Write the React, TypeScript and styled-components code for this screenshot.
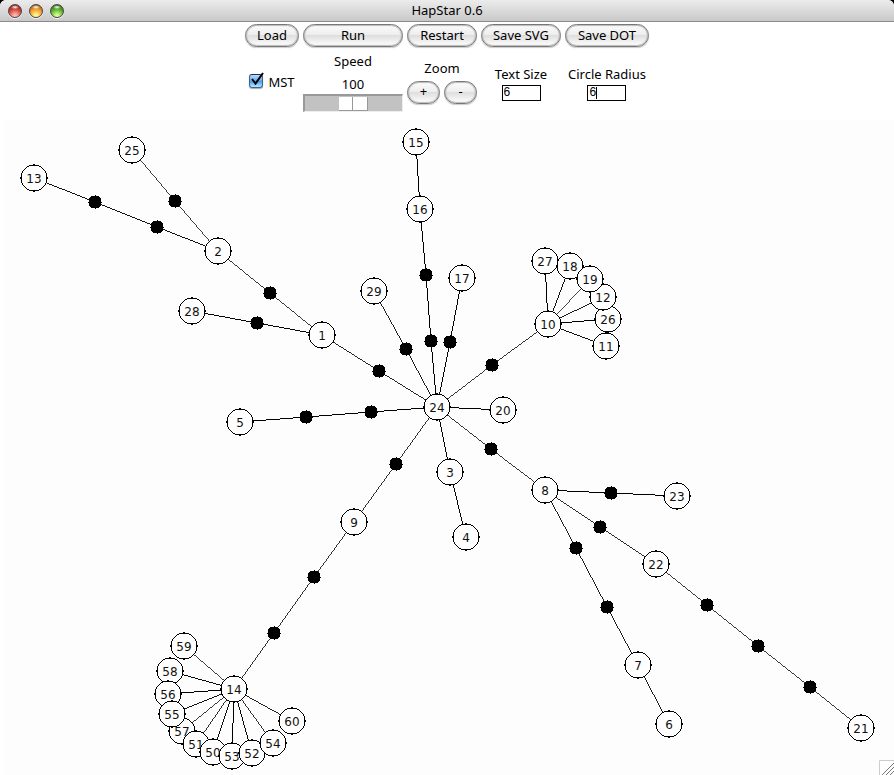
import React, { useState } from "react";
import styled, { createGlobalStyle, css } from "styled-components";

const GlobalStyle = createGlobalStyle`
  * { box-sizing: border-box; }
  html, body, #root { height: 100%; }
  body {
    margin: 0;
    overflow: hidden;
    background: #fff;
    color: #000;
    font: 13px/18px "Noto Sans", "Open Sans", sans-serif;
  }
`;

const Window = styled.div`
  display: flex;
  flex-direction: column;
  height: 100vh;
  background: #fff;
`;

const TitleBar = styled.header`
  display: grid;
  grid-template-columns: 1fr auto 1fr;
  align-items: center;
  flex: none;
  height: 22px;
  padding: 0 8px;
  border-bottom: 1px solid #8a8a8a;
  border-radius: 6px 6px 0 0;
  background: linear-gradient(#ececec, #c8c8c8);
  box-shadow: 0 -6px 0 6px #000;
`;

const Title = styled.h1`
  margin: 0;
  padding-bottom: 2px;
  font-size: 13px;
  font-weight: 400;
  line-height: 18px;
`;

const Lights = styled.div`
  display: flex;
  gap: 7px;
`;

const Light = styled.button<{ $dark: string; $mid: string; $glow: string }>`
  width: 14px;
  height: 14px;
  padding: 0;
  border: 1px solid #4c4444;
  border-radius: 50%;
  background:
    radial-gradient(ellipse 4px 2px at 50% 18%, #fff, transparent),
    radial-gradient(circle at 50% 90%, ${(p) => p.$glow} 10%, ${(p) => p.$mid} 55%, ${(p) => p.$dark});
  box-shadow: 0 1px 0 #f2f2f2;
`;

const Toolbar = styled.div`
  display: grid;
  grid-template-columns: 54px 100px 70px 80px 84px;
  column-gap: 4px;
  justify-content: center;
  flex: none;
  height: 98px;
  padding-top: 2px;
`;

const Column = styled.div`
  display: flex;
  flex-direction: column;
  align-items: center;
`;

const Group = styled.div<{ $raise: number }>`
  display: flex;
  flex: 1;
  flex-direction: column;
  align-items: center;
  justify-content: center;
  padding-bottom: ${(p) => p.$raise}px;
  white-space: nowrap;
`;

const PushButton = styled.button<{ $small?: boolean }>`
  width: ${(p) => (p.$small ? "33px" : "100%")};
  height: 23px;
  padding: 0 0 2px;
  border: 1px solid #777;
  border-radius: 12px;
  background: linear-gradient(#fcfcfc, #eee 45%, #dedede 50%, #fff);
  box-shadow: inset 0 0 1px 1px #bbb, 0 1px 1px #ccc;
  color: #000;
  font: inherit;
  white-space: nowrap;
`;

const CheckLabel = styled.label`
  display: flex;
  align-items: center;
  gap: 4px;
`;

const CheckWrap = styled.span`
  position: relative;
  display: block;
  width: 15px;
  height: 20px;
`;

const Check = styled.input`
  appearance: none;
  display: block;
  width: 14px;
  height: 14px;
  margin: 2px 0 0;
  border: 1px solid #3b5fa0;
  border-top-color: #1c2a72;
  border-radius: 3px;
  background: linear-gradient(#b9dcf8, #66acea 48%, #4a9ae6 52%, #aef0ff);
  box-shadow: 0 1px 1px #aaa;
  &:not(:checked) + svg { visibility: hidden; }
`;

const CheckMark = styled.svg`
  position: absolute;
  top: 0;
  left: 0;
  pointer-events: none;
`;

const SpeedLabel = styled.label`
  display: flex;
  flex-direction: column;
  align-items: center;
  gap: 5px;
  margin: 5px 0 1px;
  width: 100%;
  text-align: center;
`;

const thumb = css`
  appearance: none;
  width: 29px;
  height: 14px;
  border: 0 solid #999;
  border-width: 0 1px 1px 0;
  border-radius: 0;
  background: linear-gradient(90deg, #fff 13px, #999 13px 14px, #fff 14px);
`;

const Slider = styled.input`
  appearance: none;
  width: 100%;
  height: 18px;
  margin: 0;
  padding: 1px 0 0;
  border: 1px solid #999;
  border-width: 2px 1px 1px 2px;
  border-right-color: #eee;
  border-bottom-color: #eee;
  background: #c2c2c2;
  &::-webkit-slider-thumb { ${thumb} }
  &::-moz-range-thumb { ${thumb} }
`;

const ZoomButtons = styled.div`
  display: flex;
  justify-content: space-between;
  width: 70px;
  margin-top: 4px;
`;

const FieldLabel = styled.label`
  display: flex;
  flex-direction: column;
  align-items: center;
  gap: 2px;
`;

const FieldWrap = styled.span`
  position: relative;
  display: block;
  height: 16px;
`;

const Field = styled.input`
  display: block;
  width: 39px;
  height: 16px;
  padding: 0 0 1px 1px;
  border: 1px solid #000;
  border-radius: 0;
  outline: none;
  background: #fff;
  font: 12px/13px "Liberation Sans", Arial, sans-serif;
`;

const Caret = styled.span`
  position: absolute;
  top: 2px;
  left: 9px;
  width: 1px;
  height: 12px;
  background: #000;
`;

const Canvas = styled.main`
  position: relative;
  flex: 1;
  min-height: 0;
  overflow: hidden;
  margin-left: 4px;
  background: #fdfdfd;
`;

const Graph = styled.svg`
  display: block;
  font: 12px "DejaVu Sans", sans-serif;
`;

const Grip = styled.svg`
  position: absolute;
  right: 0;
  bottom: 0;
`;

type Point = [number, number];

const nodes: Record<string, Point> = {
  "15": [416, 142], "16": [420, 209], "17": [462, 278], "29": [374, 291],
  "25": [132, 150], "13": [34, 178], "2": [218, 251], "28": [192, 311],
  "1": [322, 335], "5": [240, 422], "20": [503, 410], "3": [450, 472],
  "4": [466, 537], "9": [354, 522], "8": [545, 490], "23": [677, 496],
  "22": [656, 564], "7": [638, 665], "6": [669, 724], "21": [861, 728],
  "27": [545, 261], "18": [570, 266], "26": [608, 319], "12": [603, 297],
  "19": [590, 279], "11": [606, 346], "10": [548, 324],
  "59": [184, 646], "58": [170, 671], "56": [168, 694], "57": [182, 731],
  "51": [196, 744], "50": [213, 752], "53": [232, 756], "52": [252, 753],
  "54": [273, 743], "55": [172, 714], "60": [292, 721],
  "14": [234, 689], "24": [437, 407],
};

const paths: { from: string; to: string; via?: Point[] }[] = [
  { from: "15", to: "16" },
  { from: "16", to: "24", via: [[426, 275], [431, 341]] },
  { from: "17", to: "24", via: [[450, 342]] },
  { from: "29", to: "24", via: [[406, 349]] },
  { from: "25", to: "2", via: [[175, 201]] },
  { from: "13", to: "2", via: [[95, 202], [157, 227]] },
  { from: "2", to: "1", via: [[270, 293]] },
  { from: "28", to: "1", via: [[257, 323]] },
  { from: "1", to: "24", via: [[379, 371]] },
  { from: "5", to: "24", via: [[306, 417], [371, 412]] },
  { from: "20", to: "24" },
  { from: "24", to: "3" },
  { from: "3", to: "4" },
  { from: "24", to: "9", via: [[396, 464]] },
  { from: "9", to: "14", via: [[314, 577], [274, 633]] },
  { from: "24", to: "8", via: [[491, 449]] },
  { from: "8", to: "23", via: [[611, 493]] },
  { from: "8", to: "22", via: [[600, 527]] },
  { from: "8", to: "7", via: [[576, 548], [607, 607]] },
  { from: "7", to: "6" },
  { from: "22", to: "21", via: [[707, 605], [758, 646], [810, 687]] },
  { from: "24", to: "10", via: [[492, 365]] },
  ...["27", "18", "19", "12", "26", "11"].map((to) => ({ from: "10", to })),
  ...["59", "58", "56", "55", "57", "51", "50", "53", "52", "54", "60"].map((to) => ({ from: "14", to })),
];

const OFFSET_X = 4;
const OFFSET_Y = 120;

// Later names are drawn over earlier ones where circles overlap.
const stacking = ["26", "12", "27", "18", "19", "58", "56", "57", "55", "51", "50", "53", "52", "54"];
const order = (name: string) => stacking.indexOf(name);

// One quarter of an aliased circle outline, with a tick on each axis.
const QUARTER = "M0 12h5v1H0zM5 11h2v1H5zM7 10h1v1H7zM8 9h1v1H8zM9 8h1v1H9zM10 7h1v1h-1zM11 5h1v2h-1zM12 0h1v5h-1zM13 0h1v1h-1zM0 13h1v1H0z";

// The stroke narrows with the slope so each step of an aliased line is one pixel.
function Edge({ a, b }: { a: Point; b: Point }) {
  const dx = Math.abs(b[0] - a[0]);
  const dy = Math.abs(b[1] - a[1]);
  return (
    <line x1={a[0]} y1={a[1]} x2={b[0]} y2={b[1]} strokeWidth={Math.max(dx, dy) / Math.hypot(dx, dy)} />
  );
}

function Network() {
  return (
    <Graph width="890" height="655" role="img" aria-label="Haplotype network">
      <g transform={`translate(${-OFFSET_X} ${-OFFSET_Y})`}>
        <g fill="none" stroke="#000" shapeRendering="crispEdges">
          {paths.map(({ from, to, via = [] }) => {
            const points = [nodes[from], ...via, nodes[to]];
            return points.slice(1).map((p, i) => <Edge key={`${from}-${to}-${i}`} a={points[i]} b={p} />);
          })}
        </g>
        {paths.flatMap(({ via = [] }) => via).map(([x, y]) => (
          <g key={`${x}-${y}`} transform={`translate(${x} ${y})`} shapeRendering="crispEdges">
            <path d="M-4-6h8v1h1v1h1v8h-1v1h-1v1h-8v-1h-1v-1h-1v-8h1v-1h1z" />
            <path d="M0-7h1v14h-1zM-7 0h14v1h-14z" />
          </g>
        ))}
        {Object.entries(nodes).sort((a, b) => order(a[0]) - order(b[0])).map(([name, [x, y]]) => (
          <g key={name} transform={`translate(${x} ${y})`}>
            <g shapeRendering="crispEdges">
              <circle r="12.5" fill="#fff" />
              <path d={QUARTER} />
              <path d={QUARTER} transform="scale(-1 1)" />
              <path d={QUARTER} transform="scale(1 -1)" />
              <path d={QUARTER} transform="scale(-1 -1)" />
            </g>
            <text y="5" textAnchor="middle" fill="#111">{name}</text>
          </g>
        ))}
      </g>
    </Graph>
  );
}

export default function App() {
  const [mst, setMst] = useState(true);
  const [speed, setSpeed] = useState(100);
  const [textSize, setTextSize] = useState("6");
  const [radius, setRadius] = useState("6");
  const [touched, setTouched] = useState(false);

  return (
    <>
      <GlobalStyle />
      <Window>
        <TitleBar>
          <Lights>
            <Light aria-label="Close" $dark="#701818" $mid="#d0443c" $glow="#ffb5a8" />
            <Light aria-label="Minimize" $dark="#8a4510" $mid="#ee9a2c" $glow="#fff68a" />
            <Light aria-label="Zoom" $dark="#22500f" $mid="#5aae2e" $glow="#d0ff8c" />
          </Lights>
          <Title>HapStar 0.6</Title>
        </TitleBar>
        <Toolbar>
          <Column>
            <PushButton>Load</PushButton>
            <Group $raise={4}>
              <CheckLabel>
                <CheckWrap>
                  <Check type="checkbox" checked={mst} onChange={(e) => setMst(e.target.checked)} />
                  <CheckMark width="16" height="16" viewBox="0 0 16 16">
                    <path d="M3 7l3.500 4.500L14 1" fill="none" stroke="#000" strokeWidth="2" />
                  </CheckMark>
                </CheckWrap>
                MST
              </CheckLabel>
            </Group>
          </Column>
          <Column>
            <PushButton>Run</PushButton>
            <SpeedLabel htmlFor="speed">
              <span>Speed</span>
              <output>{speed}</output>
            </SpeedLabel>
            <Slider id="speed" type="range" min="0" max="200" value={speed} onChange={(e) => setSpeed(+e.target.value)} />
          </Column>
          <Column>
            <PushButton>Restart</PushButton>
            <Group $raise={5}>
              <span>Zoom</span>
              <ZoomButtons>
                <PushButton $small aria-label="Zoom in">+</PushButton>
                <PushButton $small aria-label="Zoom out">-</PushButton>
              </ZoomButtons>
            </Group>
          </Column>
          <Column>
            <PushButton>Save SVG</PushButton>
            <Group $raise={2}>
              <FieldLabel>
                Text Size
                <Field value={textSize} onChange={(e) => setTextSize(e.target.value)} />
              </FieldLabel>
            </Group>
          </Column>
          <Column>
            <PushButton>Save DOT</PushButton>
            <Group $raise={2}>
              <FieldLabel>
                Circle Radius
                <FieldWrap>
                  <Field
                    value={radius}
                    onFocus={() => setTouched(true)}
                    onChange={(e) => setRadius(e.target.value)}
                  />
                  {!touched && <Caret />}
                </FieldWrap>
              </FieldLabel>
            </Group>
          </Column>
        </Toolbar>
        <Canvas>
          <Network />
          <Grip width="15" height="15" viewBox="0 0 15 15" aria-hidden="true">
            <path d="M0 15V0h15v15z" fill="#fff" />
            <path d="M.5 15V.5H15" fill="none" stroke="#ccc" />
            <path d="M3 15L15 3M7 15l8-8M11 15l4-4" stroke="#777" />
          </Grip>
        </Canvas>
      </Window>
    </>
  );
}
